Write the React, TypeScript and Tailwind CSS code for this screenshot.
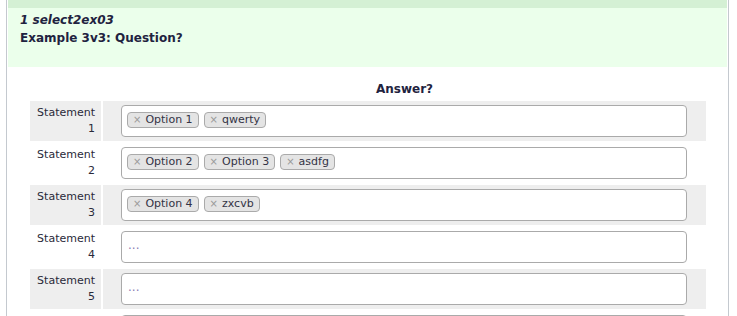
import React from 'react';

type Row = { n: number; tags: string[] };

const rows: Row[] = [
  { n: 1, tags: ['Option 1', 'qwerty'] },
  { n: 2, tags: ['Option 2', 'Option 3', 'asdfg'] },
  { n: 3, tags: ['Option 4', 'zxcvb'] },
  { n: 4, tags: [] },
  { n: 5, tags: [] },
  { n: 6, tags: [] },
];

const Tag: React.FC<{ label: string }> = ({ label }) => (
  <span className="mr-[5px] mt-[6px] inline-flex h-[16px] items-center rounded-[4px] border border-[#aaaaaa] bg-[#e4e4e4] pl-[5px] pr-[5px] text-[11px] leading-[14px] text-[#333344]">
    <span className="mr-[4px] text-[10px] text-[#999999]">×</span>
    {label}
  </span>
);

const SelectBox: React.FC<{ tags: string[]; hint: boolean }> = ({ tags, hint }) => (
  <div className="ml-[18px] flex h-[32px] w-[566px] flex-wrap items-start rounded-[4px] border border-[#aaaaaa] bg-white px-[5px]">
    {tags.length > 0
      ? tags.map((t) => <Tag key={t} label={t} />)
      : hint && <span className="pl-[1px] pt-[4px] text-[12px] leading-[18px] text-[#8a7cb4]">...</span>}
  </div>
);

export default function App() {
  return (
    <div className="h-[316px] overflow-hidden bg-white font-['DejaVu_Sans','Verdana',sans-serif] text-[11px] text-[#2a2a3a]">
      <div className="ml-[6px] h-full w-[723px] border-x border-[#c4c9cf] px-px">
        <div className="h-[8px] bg-[#d4f0d4]" />
        <div className="h-[59px] bg-[#ebffeb] pl-[12px] pt-[3px] text-[#1f2340]">
          <div className="text-[12px] font-bold italic leading-[18px]">1 select2ex03</div>
          <div className="text-[12px] font-bold leading-[18px]">Example 3v3: Question?</div>
        </div>

        <div className="ml-[22px] mt-[12px] grid grid-cols-[71px_603px] gap-[2px]">
          <div className="h-[20px]" />
          <div className="flex h-[20px] items-center justify-center text-[12px] font-bold text-[#1f2340]">
            Answer?
          </div>
          {rows.map((r) => {
            const bg = r.n % 2 === 1 ? 'bg-[#eeeeee]' : 'bg-white';
            return (
              <React.Fragment key={r.n}>
                <div className={`flex h-[40px] flex-col items-end justify-center pr-[6px] leading-[16px] ${bg}`}>
                  {r.n < 6 && (
                    <>
                      <span>Statement</span>
                      <span>{r.n}</span>
                    </>
                  )}
                </div>
                <div className={`flex h-[40px] items-center ${bg}`}>
                  <SelectBox tags={r.tags} hint={r.n < 6} />
                </div>
              </React.Fragment>
            );
          })}
        </div>
      </div>
    </div>
  );
}
